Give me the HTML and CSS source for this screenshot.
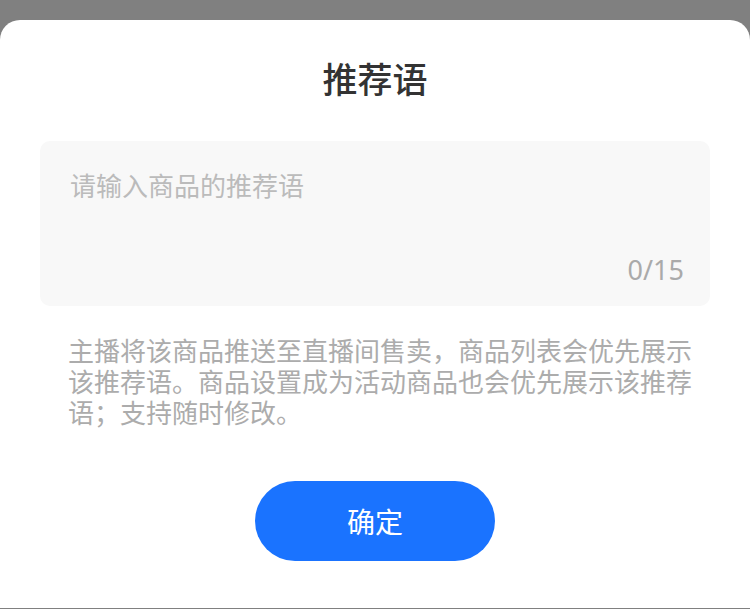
FILE: index.html
```html
<!DOCTYPE html>
<html lang="zh-CN">
<head>
<meta charset="utf-8">
<title>推荐语</title>
<link rel="stylesheet" href="styles.css">
</head>
<body>
<div class="sheet">
  <h1 class="title">推荐语</h1>
  <div class="input-box">
    <div class="placeholder">请输入商品的推荐语</div>
    <div class="counter">0/15</div>
  </div>
  <p class="desc">主播将该商品推送至直播间售卖，商品列表会优先展示该推荐语。商品设置成为活动商品也会优先展示该推荐语；支持随时修改。</p>
  <div class="actions">
    <button class="confirm">确定</button>
  </div>
</div>
</body>
</html>
```

FILE: styles.css
```css
html, body {
  margin: 0;
  padding: 0;
}
body {
  background: #808080;
  padding-top: 20px;
  height: 609px;
  box-sizing: border-box;
  font-family: "Noto Sans CJK SC", "Noto Sans", sans-serif;
  overflow: hidden;
}
.sheet {
  background: #fff;
  border-radius: 20px 20px 0 0;
  height: 588px;
  padding-top: 38px;
  box-sizing: border-box;
}
.title {
  margin: 0;
  font-size: 35px;
  line-height: 40px;
  font-weight: 500;
  color: #333;
  text-align: center;
}
.input-box {
  margin: 43px 40px 0;
  height: 165px;
  box-sizing: border-box;
  background: #f8f8f8;
  border-radius: 10px;
  padding: 26px 26px 18px 30px;
  display: flex;
  flex-direction: column;
  justify-content: space-between;
}
.placeholder {
  font-size: 26px;
  line-height: 36px;
  color: #bbb;
}
.counter {
  font-size: 27px;
  line-height: 36px;
  color: #aaa;
  text-align: right;
  font-family: "Noto Sans", "Roboto", sans-serif;
}
.desc {
  margin: 28px 0 0;
  padding: 0 56px 0 68px;
  font-size: 26px;
  line-height: 31px;
  color: #acacac;
}
.actions {
  display: flex;
  justify-content: center;
  margin-top: 54px;
}
.confirm {
  width: 240px;
  height: 80px;
  border: none;
  border-radius: 40px;
  background: #1a73ff;
  color: #fff;
  font-family: "Noto Sans CJK SC", sans-serif;
  font-size: 28px;
  padding: 0;
}
```
